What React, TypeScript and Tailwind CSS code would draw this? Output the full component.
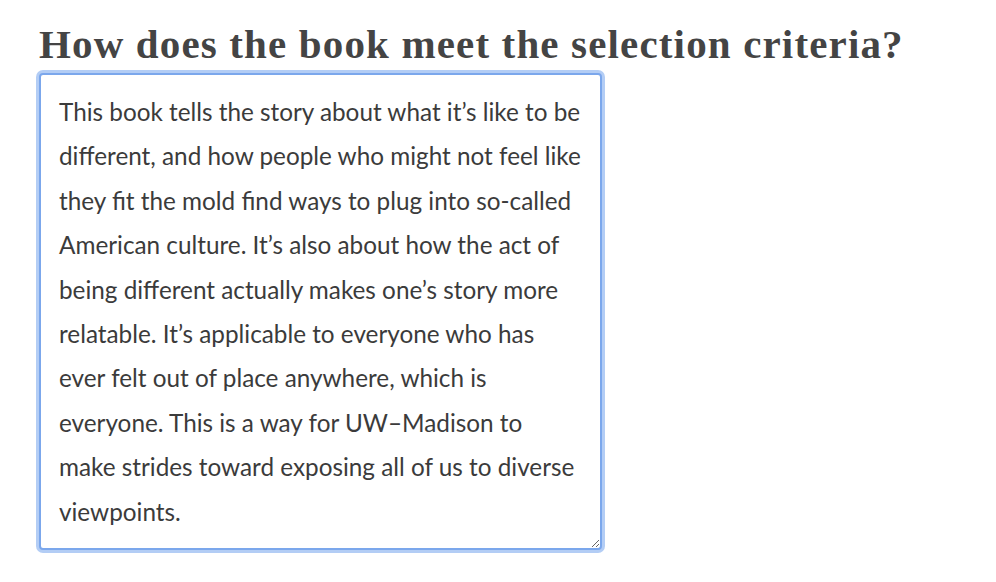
const answer = [
  'This book tells the story about what it\u2019s like to be',
  'different, and how people who might not feel like',
  'they fit the mold find ways to plug into so-called',
  'American culture. It\u2019s also about how the act of',
  'being different actually makes one\u2019s story more',
  'relatable. It\u2019s applicable to everyone who has',
  'ever felt out of place anywhere, which is',
  'everyone. This is a way for UW\u2013Madison to',
  'make strides toward exposing all of us to diverse',
  'viewpoints.',
].join('\n');

export default function App() {
  return (
    <div className="min-h-[582px] w-[996px] bg-white pl-[39px] pt-[20px]">
      <h2 className="font-['Liberation_Serif',Georgia,serif] text-[41px] font-bold leading-[48px] tracking-[1.15px] text-[#444444]">
        How does the book meet the selection criteria?
      </h2>
      <textarea
        defaultValue={answer}
        spellCheck={false}
        className="mt-[5px] block h-[477px] w-[563px] resize rounded-[4px] border-2 border-[#7ba7ec] bg-white px-[18px] pt-[15px] font-['Lato',sans-serif] text-[24.3px] leading-[44.4px] whitespace-pre text-[#3b3b3b] shadow-[0_0_0_3px_#b3cdf5] outline-none"
      />
    </div>
  );
}
